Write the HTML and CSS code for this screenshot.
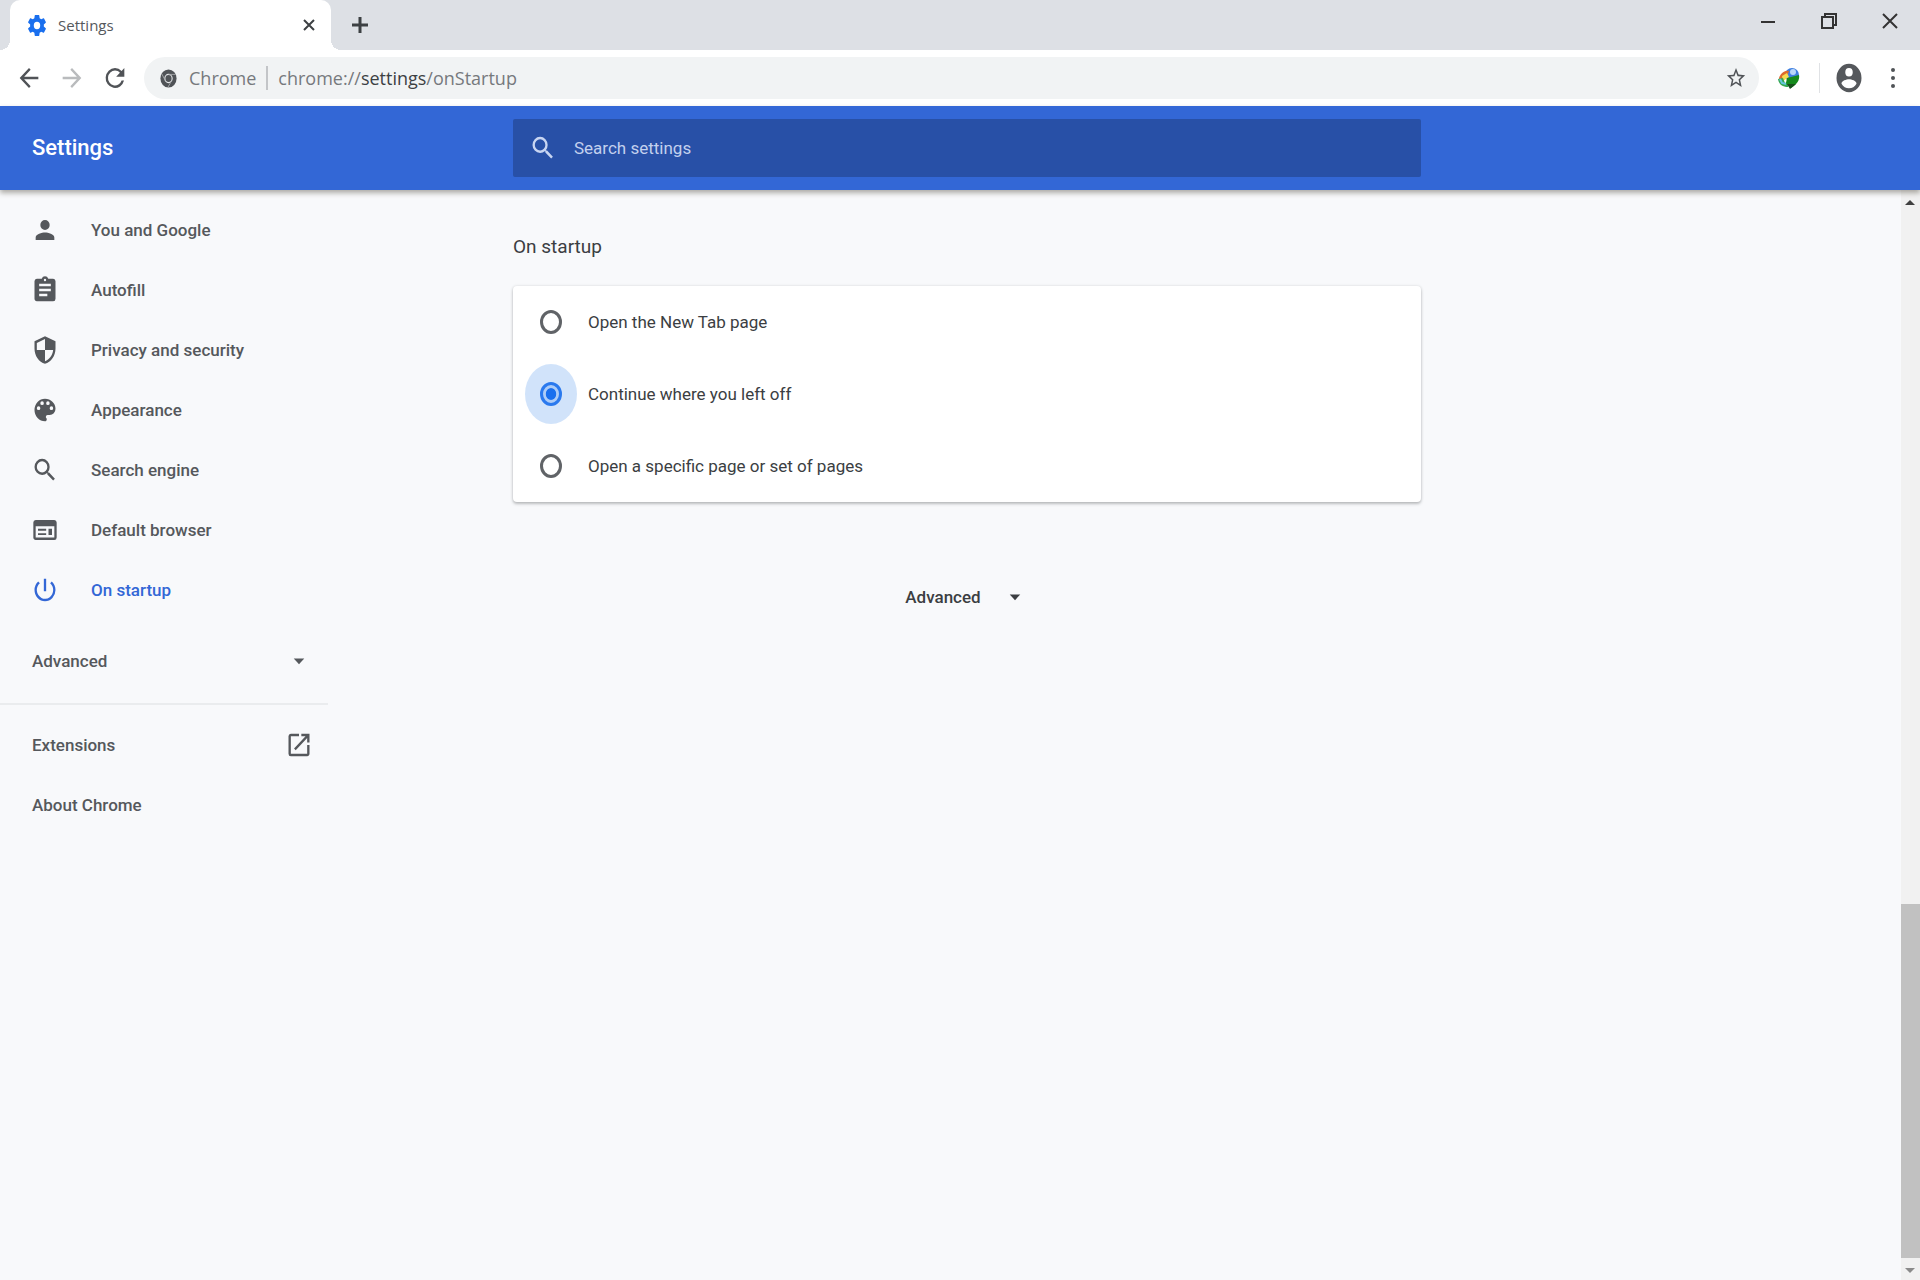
FILE: index.html
```html
<!DOCTYPE html>
<html lang="en">
<head>
<meta charset="utf-8">
<title>Settings</title>
<link rel="stylesheet" href="styles.css">
</head>
<body>
<div class="tab-strip">
  <div class="tab">
    <svg class="gear" viewBox="0 0 24 24" preserveAspectRatio="none" aria-hidden="true"><path fill="#1a6fee" d="M19.43 12.98c.04-.32.07-.64.07-.98s-.03-.66-.07-.98l2.11-1.65c.19-.15.24-.42.12-.64l-2-3.46c-.12-.22-.39-.3-.61-.22l-2.49 1c-.52-.4-1.08-.73-1.69-.98l-.38-2.65C14.46 2.18 14.25 2 14 2h-4c-.25 0-.46.18-.49.42l-.38 2.65c-.61.25-1.17.59-1.69.98l-2.49-1c-.23-.09-.49 0-.61.22l-2 3.46c-.13.22-.07.49.12.64l2.11 1.65c-.04.32-.07.65-.07.98s.03.66.07.98l-2.11 1.65c-.19.15-.24.42-.12.64l2 3.46c.12.22.39.3.61.22l2.49-1c.52.4 1.08.73 1.69.98l.38 2.65c.03.24.24.42.49.42h4c.25 0 .46-.18.49-.42l.38-2.65c.61-.25 1.17-.59 1.69-.98l2.49 1c.23.09.49 0 .61-.22l2-3.46c.12-.22.07-.49-.12-.64l-2.11-1.65zM12 15.5a3.500 3.500 0 1 1 0-7 3.500 3.500 0 0 1 0 7z"/></svg>
    <span class="tab-title">Settings</span>
    <button class="tab-close" aria-label="Close tab"><svg width="12" height="12" viewBox="0 0 12 12"><path d="M1 1l10 10M11 1L1 11" stroke="#3c4043" stroke-width="2"/></svg></button>
  </div>
  <button class="new-tab" aria-label="New tab"><svg width="18" height="18" viewBox="0 0 18 18"><path d="M9 1v16M1 9h16" stroke="#3c4043" stroke-width="3"/></svg></button>
  <div class="window-controls">
    <button aria-label="Minimize"><svg width="16" height="18" viewBox="0 0 16 18"><path d="M1 10h14" stroke="#333" stroke-width="2"/></svg></button>
    <button aria-label="Restore"><svg width="16" height="18" viewBox="0 0 16 18" fill="none" stroke="#333" stroke-width="2"><path d="M4 5V2h11v11h-3"/><path d="M1 5h11v11H1z"/></svg></button>
    <button aria-label="Close"><svg width="16" height="18" viewBox="0 0 16 18"><path d="M1 2l14 14M15 2L1 16" stroke="#333" stroke-width="2"/></svg></button>
  </div>
</div>
<div class="toolbar">
  <button class="nav-button" aria-label="Back"><svg class="icon" viewBox="0 0 24 24" preserveAspectRatio="none"><path fill="#505357" d="M20 11H7.830l5.590-5.590L12 4l-8 8 8 8 1.410-1.410L7.830 13H20z"/></svg></button>
  <button class="nav-button" aria-label="Forward"><svg class="icon" viewBox="0 0 24 24" preserveAspectRatio="none"><path fill="#b9bbbd" d="M12 4l-1.410 1.410L16.170 11H4v2h12.170l-5.580 5.590L12 20l8-8z"/></svg></button>
  <button class="nav-button" aria-label="Reload"><svg class="icon" viewBox="0 0 24 24" preserveAspectRatio="none"><path fill="#505357" d="M17.650 6.350A7.960 7.960 0 0 0 12 4a8 8 0 1 0 7.730 10h-2.080A6 6 0 1 1 12 6c1.660 0 3.140.69 4.220 1.780L13 11h7V4z"/></svg></button>
  <div class="omnibox">
    <svg class="site-icon" viewBox="0 0 20 20" preserveAspectRatio="none" aria-hidden="true"><circle cx="10" cy="10" r="9.500" fill="#505357"/><circle cx="10" cy="10" r="4.300" fill="none" stroke="#e4e6e8" stroke-width="1.300"/><path d="M10 5.700h8.500M6.300 12.200L2 5M13.700 12.200L9.500 19" stroke="#a5a7a9" stroke-width="1"/></svg>
    <span>Chrome</span>
    <span class="origin-divider"></span>
    <span class="url">chrome://<b>settings</b>/onStartup</span>
    <button class="star" aria-label="Bookmark this page"><svg width="22" height="24" viewBox="0 0 24 24" preserveAspectRatio="none"><path fill="#505357" d="M22 9.240l-7.190-.62L12 2 9.190 8.630 2 9.240l5.460 4.730L5.820 21 12 17.270 18.180 21l-1.630-7.030zM12 15.400l-3.760 2.270 1-4.280-3.320-2.880 4.380-.38L12 6.100l1.710 4.040 4.380.38-3.320 2.880 1 4.280z"/></svg></button>
  </div>
  <button class="extension" aria-label="Download manager"><svg width="24" height="24" viewBox="0 0 24 24"><circle cx="15" cy="9" r="7" fill="#3f7fe0"/><circle cx="16" cy="6" r="3" fill="#b9d7fa"/><path d="M2 12C4 6 9 4 12 5l-2 6-7 6z" fill="#dc6a2c"/><path d="M5 10l5-3 2 4-6 4z" fill="#f5dc50"/><path d="M1 13c1 6 5 8 10 8l3-6-6 2-2-5z" fill="#35a853"/><path d="M3 13l2 4 4 1" fill="none" stroke="#65c6df" stroke-width="2"/><path d="M10 12l12-3c1 5-2 9-8 13l-5-5z" fill="#158a1c"/><path d="M10 18h9l-6 5z" fill="#174f1c"/></svg></button>
  <span class="toolbar-divider"></span>
  <button class="profile" aria-label="Profile"><svg width="30" height="34" viewBox="0 0 24 24" preserveAspectRatio="none"><path fill="#55585c" d="M12 2a10 10 0 1 0 0 20 10 10 0 0 0 0-20zm0 3a3 3 0 1 1 0 6 3 3 0 0 1 0-6zm0 14.200a7.200 7.200 0 0 1-6-3.220c.03-1.990 4-3.080 6-3.080s5.970 1.090 6 3.080a7.200 7.200 0 0 1-6 3.220z"/></svg></button>
  <button class="menu" aria-label="Menu"><svg width="6" height="22" viewBox="0 0 6 22" fill="#505357"><circle cx="3" cy="3" r="2"/><circle cx="3" cy="11" r="2"/><circle cx="3" cy="19" r="2"/></svg></button>
</div>
<header class="header">
  <h1>Settings</h1>
  <label class="search">
    <svg class="icon" viewBox="0 0 24 24" preserveAspectRatio="none" aria-hidden="true"><path fill="#c8d5f2" d="M15.500 14h-.79l-.28-.27A6.470 6.470 0 0 0 16 9.500 6.500 6.500 0 1 0 9.500 16c1.610 0 3.090-.59 4.230-1.570l.27.28v.79l5 4.990L20.490 19zm-6 0a4.500 4.500 0 1 1 0-9 4.500 4.500 0 0 1 0 9z"/></svg>
    <input type="search" placeholder="Search settings" aria-label="Search settings">
  </label>
</header>
<div class="page">
  <div class="content">
    <nav class="sidebar">
      <a href="#people"><svg class="icon" viewBox="0 0 24 24" preserveAspectRatio="none"><path d="M12 12a4 4 0 1 0 0-8 4 4 0 0 0 0 8zm0 2c-2.670 0-8 1.340-8 4v2h16v-2c0-2.660-5.330-4-8-4z"/></svg>You and Google</a>
      <a href="#autofill"><svg class="icon" viewBox="0 0 24 24" preserveAspectRatio="none"><path d="M19 3h-4.180a3 3 0 0 0-5.640 0H5a2 2 0 0 0-2 2v14c0 1.100.9 2 2 2h14a2 2 0 0 0 2-2V5a2 2 0 0 0-2-2zm-7 0a1 1 0 1 1 0 2 1 1 0 0 1 0-2zm2 14H7v-2h7zm3-4H7v-2h10zm0-4H7V7h10z"/></svg>Autofill</a>
      <a href="#privacy"><svg class="icon" viewBox="0 0 24 24" preserveAspectRatio="none"><path d="M12 1L3 5v6c0 5.550 3.840 10.740 9 12 5.160-1.260 9-6.450 9-12V5zm0 10.990h7c-.53 4.120-3.280 7.790-7 8.940V12H5V6.300l7-3.110z"/></svg>Privacy and security</a>
      <a href="#appearance"><svg class="icon" viewBox="0 0 24 24" preserveAspectRatio="none"><path d="M12 3a9 9 0 0 0 0 18c.83 0 1.500-.67 1.500-1.500 0-.39-.15-.74-.39-1.010-.23-.26-.38-.61-.38-.99 0-.83.67-1.500 1.500-1.500H16a5 5 0 0 0 5-5c0-4.420-4.030-8-9-8zm-5.500 9a1.500 1.500 0 1 1 0-3 1.500 1.500 0 0 1 0 3zm3-4a1.500 1.500 0 1 1 0-3 1.500 1.500 0 0 1 0 3zm5 0a1.500 1.500 0 1 1 0-3 1.500 1.500 0 0 1 0 3zm3 4a1.500 1.500 0 1 1 0-3 1.500 1.500 0 0 1 0 3z"/></svg>Appearance</a>
      <a href="#search"><svg class="icon" viewBox="0 0 24 24" preserveAspectRatio="none"><path d="M15.500 14h-.79l-.28-.27A6.470 6.470 0 0 0 16 9.500 6.500 6.500 0 1 0 9.500 16c1.610 0 3.090-.59 4.230-1.570l.27.28v.79l5 4.990L20.490 19zm-6 0a4.500 4.500 0 1 1 0-9 4.500 4.500 0 0 1 0 9z"/></svg>Search engine</a>
      <a href="#default"><svg class="icon" viewBox="0 0 24 24" preserveAspectRatio="none"><path fill-rule="evenodd" d="M20 4H4a2 2 0 0 0-2 2v12c0 1.100.9 2 2 2h16a2 2 0 0 0 2-2V6a2 2 0 0 0-2-2zM4 9h16v9H4zm2 2h7v1.500H6zm0 3.500h7V16H6zm9-3.500h3v5h-3z"/></svg>Default browser</a>
      <a href="#startup" class="selected"><svg class="icon" viewBox="0 0 24 24" preserveAspectRatio="none"><path d="M13 3h-2v10h2zm4.830 2.170l-1.420 1.420A6.920 6.920 0 0 1 19 12a7 7 0 1 1-11.420-5.420L6.170 5.170A8.930 8.930 0 0 0 3 12a9 9 0 0 0 18 0c0-2.740-1.230-5.180-3.170-6.830z"/></svg>On startup</a>
      <button class="advanced-menu">Advanced<svg class="icon" viewBox="0 0 24 24" preserveAspectRatio="none"><path d="M7.500 10l4.500 4.500 4.500-4.500z"/></svg></button>
      <hr>
      <a href="#extensions" class="plain">Extensions<svg class="icon" viewBox="0 0 24 24" preserveAspectRatio="none"><path d="M19 19H5V5h7V3H5a2 2 0 0 0-2 2v14a2 2 0 0 0 2 2h14c1.100 0 2-.9 2-2v-7h-2zM14 3v2h3.590l-9.830 9.830 1.410 1.410L19 6.410V10h2V3z"/></svg></a>
      <a href="#about" class="plain">About Chrome</a>
    </nav>
    <main>
      <h2 id="startup-title">On startup</h2>
      <div class="card" role="radiogroup" aria-labelledby="startup-title">
        <label><input type="radio" name="startup">Open the New Tab page</label>
        <label><input type="radio" name="startup" checked>Continue where you left off</label>
        <label><input type="radio" name="startup">Open a specific page or set of pages</label>
      </div>
      <button class="advanced-toggle">Advanced<svg class="icon" viewBox="0 0 24 24" preserveAspectRatio="none"><path d="M7.500 10l4.500 4.500 4.500-4.500z"/></svg></button>
    </main>
  </div>
  <div class="scrollbar" aria-hidden="true">
    <svg width="19" height="22" viewBox="0 0 19 22"><path d="M4 15l5-5 5 5z" fill="#404040"/></svg>
    <div class="thumb"></div>
    <svg width="19" height="22" viewBox="0 0 19 22"><path d="M4 10l5 5 5-5z" fill="#8a8a8a"/></svg>
  </div>
</div>
</body>
</html>
```

FILE: styles.css
```css
* { box-sizing: border-box; }

body {
  margin: 0;
  min-height: 100vh;
  display: flex;
  flex-direction: column;
  background: #f8f9fb;
  color: #55585c;
  font-family: Roboto, "Liberation Sans", sans-serif;
  font-size: 17px;
  line-height: 24px;
}

button {
  display: flex;
  align-items: center;
  justify-content: center;
  padding: 0;
  border: 0;
  background: none;
  color: inherit;
  font: inherit;
}

svg { display: block; flex: none; }

.icon { width: 28px; height: 30px; fill: currentColor; }

/* Window frame */
.tab-strip {
  display: flex;
  height: 50px;
  background: #dde0e5;
}

.tab {
  position: relative;
  display: flex;
  align-items: center;
  width: 321px;
  margin-left: 10px;
  padding: 0 12px 0 16px;
  border-radius: 10px 10px 0 0;
  background: #fff;
}

.tab::before,
.tab::after {
  content: "";
  position: absolute;
  bottom: 0;
  width: 10px;
  height: 10px;
}

.tab::before {
  right: 100%;
  background: radial-gradient(circle at 0 0, transparent 10px, #fff 10px);
}

.tab::after {
  left: 100%;
  background: radial-gradient(circle at 100% 0, transparent 10px, #fff 10px);
}

.gear { width: 22px; height: 25px; }

.tab-title {
  flex: 1;
  margin-left: 10px;
  font-family: "Open Sans", "Noto Sans", sans-serif;
  font-size: 15px;
}

.tab-close { width: 20px; height: 20px; }

.new-tab { width: 58px; }

.window-controls {
  display: flex;
  height: 42px;
  margin-left: auto;
}

.window-controls button { width: 61px; }

.toolbar {
  display: flex;
  align-items: center;
  height: 56px;
  padding: 0 12px 0 7px;
  background: #fff;
}

.nav-button { width: 43px; height: 42px; }

.omnibox {
  flex: 1;
  display: flex;
  align-items: center;
  height: 42px;
  margin-left: 8px;
  padding: 0 12px 0 16px;
  border-radius: 21px;
  background: #f1f3f4;
  color: #76797d;
  font-family: "Open Sans", "Noto Sans", sans-serif;
  font-size: 18px;
}

.site-icon { width: 17px; height: 19px; margin-right: 12px; }

.origin-divider {
  width: 2px;
  height: 24px;
  margin: 0 10px;
  background: #c3c5c8;
}

.url b { color: #3c4043; font-weight: 400; }

.star { margin-left: auto; }

.extension { width: 60px; }

.toolbar-divider { width: 1px; height: 30px; background: #e0e2e5; }

.profile { width: 58px; }

.menu { width: 30px; }

/* Settings header */
.header {
  z-index: 1;
  display: grid;
  grid-template-columns: 513px minmax(0, 908px);
  align-items: center;
  height: 84px;
  background: #3367d6;
  box-shadow: 0 3px 5px rgba(60, 55, 40, 0.4);
}

h1 {
  margin: 0;
  padding-left: 32px;
  color: #fff;
  font-size: 22px;
  font-weight: 500;
}

.search {
  display: flex;
  align-items: center;
  height: 58px;
  padding-left: 16px;
  border-radius: 2px;
  background: #2850a7;
}

.search input {
  flex: 1;
  margin-left: 17px;
  padding: 0;
  border: 0;
  outline: 0;
  background: none;
  color: #fff;
  font: inherit;
}

.search input::placeholder { color: #c3d0ee; opacity: 1; }

/* Settings page */
.page { flex: 1; display: flex; }

.content {
  flex: 1;
  display: grid;
  grid-template-columns: 328px minmax(0, 908px);
  column-gap: 185px;
  align-content: start;
}

.sidebar { padding-top: 10px; font-weight: 500; }

.sidebar a,
.advanced-menu {
  display: flex;
  align-items: center;
  gap: 32px;
  width: 100%;
  height: 60px;
  padding: 0 15px 0 31px;
  color: inherit;
  text-decoration: none;
}

.sidebar .plain,
.sidebar .advanced-menu { justify-content: space-between; padding-left: 32px; }

.sidebar .selected { color: #3367d6; }

.advanced-menu { margin-top: 11px; }

.sidebar hr {
  height: 2px;
  margin: 12px 0 10px;
  border: 0;
  background: #eaecee;
}

main { color: #3b3e42; }

h2 {
  margin: 45px 0 27px;
  font-size: 19px;
  font-weight: 400;
}

.card {
  border-radius: 4px;
  background: #fff;
  box-shadow: 0 2px 3px rgba(60, 64, 67, 0.3), 0 0 3px rgba(60, 64, 67, 0.15);
}

.card label {
  display: flex;
  align-items: center;
  gap: 26px;
  height: 72px;
  padding-left: 27px;
}

.card input {
  appearance: none;
  flex: none;
  width: 22px;
  height: 24px;
  margin: 0;
  border: 3px solid #606367;
  border-radius: 50%;
}

.card input:checked {
  position: relative;
  border-color: #2f7bf0;
  background: radial-gradient(closest-side, #1a6ff0 60%, #d2e3fc 70%);
}

.card input:checked::before {
  content: "";
  position: absolute;
  inset: -21px -18px;
  border-radius: 50%;
  background: rgba(26, 115, 232, 0.2);
}

.advanced-toggle {
  gap: 20px;
  height: 60px;
  margin: 65px auto 0;
  font-weight: 500;
}

.scrollbar {
  display: flex;
  flex-direction: column;
  width: 19px;
  background: #f1f1f1;
}

.thumb { height: 354px; margin-top: auto; background: #c1c1c1; }
```
